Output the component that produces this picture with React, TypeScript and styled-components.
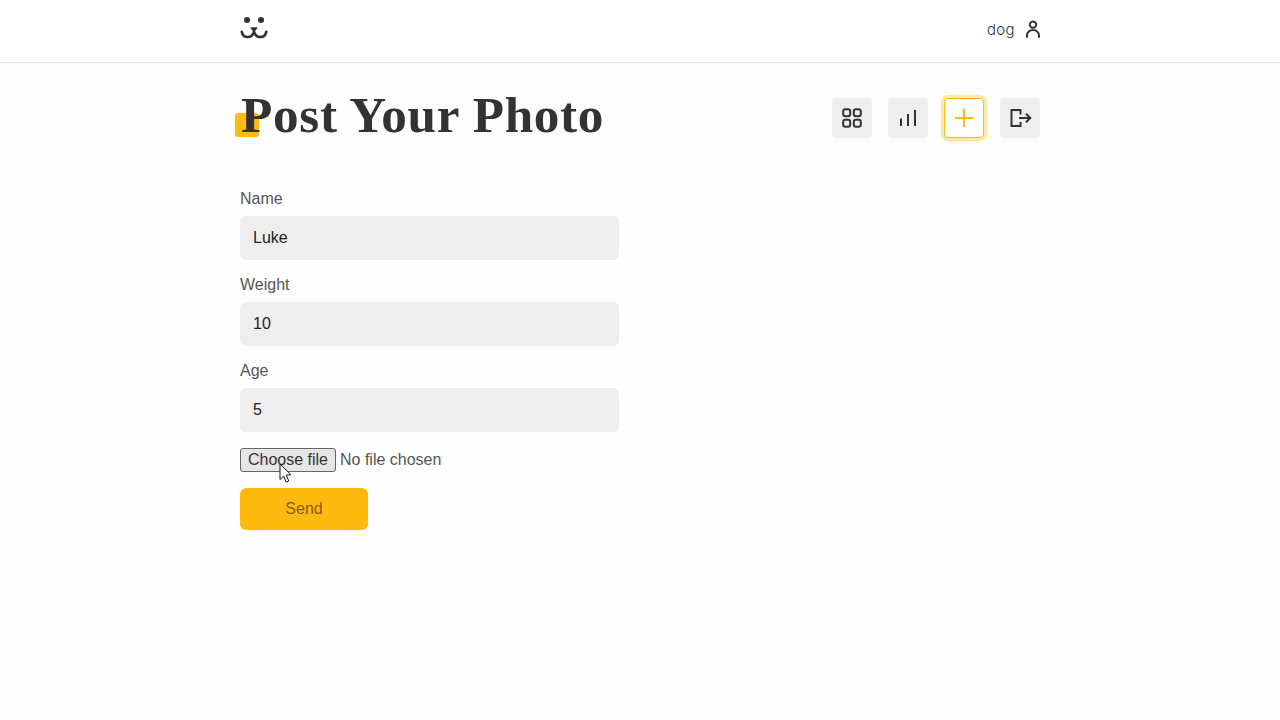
import React from "react";
import styled, { createGlobalStyle } from "styled-components";

const Global = createGlobalStyle`
  html, body { margin: 0; padding: 0; background: #fefefe; height: 100%; overflow: hidden; }
  body { font-family: "Liberation Sans", Arial, sans-serif; color: #333; }
`;

const TopBar = styled.header`
  height: 62px;
  border-bottom: 1px solid #e8e8e8;
  background: #fff;
`;
const Container = styled.div`
  width: 800px;
  margin: 0 auto;
`;
const TopInner = styled(Container)`
  height: 100%;
  display: flex;
  align-items: center;
  justify-content: space-between;
`;
const Logo = styled.svg`
  width: 28px;
  height: 26px;
  display: block;
  margin-top: -6px;
`;
const User = styled.div`
  display: flex;
  align-items: center;
  gap: 11px;
  font-family: Inter, sans-serif;
  font-size: 15px;
  font-weight: 300;
  letter-spacing: 0.35px;
  color: #333;
  margin-top: -4px;
`;
const Head = styled.div`
  display: flex;
  justify-content: space-between;
  align-items: flex-start;
  padding-top: 22px;
  height: 74px;
  margin-bottom: 31px;
`;
const Title = styled.h1`
  position: relative;
  z-index: 0;
  margin: 0;
  font-family: "Liberation Serif", serif;
  font-size: 51.2px;
  font-weight: 700;
  line-height: 60px;
  letter-spacing: 0.7px;
  color: #333;
  padding-left: 1px;
  &::before {
    content: "";
    position: absolute;
    z-index: -1;
    left: -5px;
    top: 28px;
    width: 24px;
    height: 24px;
    border-radius: 3px;
    background: #ffba10;
  }
`;
const Actions = styled.nav`
  display: flex;
  gap: 16px;
  margin-top: 13px;
`;
const Action = styled.button<{ $active?: boolean }>`
  width: 40px;
  height: 40px;
  padding: 0;
  border-radius: 4px;
  display: flex;
  align-items: center;
  justify-content: center;
  background: ${(p) => (p.$active ? "#fff" : "#eee")};
  color: ${(p) => (p.$active ? "#ffb90f" : "#333")};
  border: ${(p) => (p.$active ? "1px solid #ffba10" : "none")};
  box-shadow: ${(p) => (p.$active ? "0 0 0 3px #ffe8a3" : "none")};
`;
const Form = styled.form`
  width: 379px;
  display: flex;
  flex-direction: column;
`;
const Field = styled.div`
  display: flex;
  flex-direction: column;
  gap: 8px;
  margin-bottom: 16px;
`;
const Label = styled.label`
  font-size: 16px;
  line-height: 18px;
  color: #555;
`;
const TextInput = styled.input`
  height: 44px;
  box-sizing: border-box;
  border: none;
  outline: none;
  border-radius: 6px;
  background: #eee;
  padding: 0 13px;
  font-family: "Liberation Sans", Arial, sans-serif;
  font-size: 16px;
  color: #222;
`;
const FileRow = styled.div`
  position: relative;
  height: 24px;
  margin-bottom: 16px;
  display: flex;
  align-items: center;
  gap: 4px;
`;
const FileButton = styled.button`
  width: 96px;
  height: 24px;
  padding: 0;
  box-sizing: border-box;
  border: 1px solid #666;
  border-radius: 3px;
  background: #e6e6e6;
  color: #333;
  font-family: "Liberation Sans", Arial, sans-serif;
  font-size: 16px;
  white-space: nowrap;
`;
const FileNote = styled.span`
  font-size: 16px;
  color: #555;
`;
const Pointer = styled.svg`
  position: absolute;
  left: 39px;
  top: 15px;
  width: 13px;
  height: 21px;
`;
const Send = styled.button`
  width: 128px;
  height: 42px;
  border: none;
  border-radius: 6px;
  background: #ffba10;
  color: #8a5a00;
  font-family: "Liberation Sans", Arial, sans-serif;
  font-size: 16px;
`;

export default function App() {
  return (
    <>
      <Global />
      <TopBar>
        <TopInner>
          <Logo viewBox="0 0 28 26">
            <circle cx="7" cy="5" r="3" fill="#333" />
            <circle cx="21" cy="5" r="3" fill="#333" />
            <path d="M11.3 13h5.4L14 16.2z" fill="#333" stroke="#333" strokeWidth="1.4" strokeLinejoin="round" />
            <path d="M1.7 16.7C3 23.5 11.5 24 14 17C16.5 24 25 23.5 26.3 16.7" fill="none" stroke="#333" strokeWidth="2.6" strokeLinecap="round" />
          </Logo>
          <User>
            dog
            <svg width="14" height="18" viewBox="0 0 14 18" fill="none" stroke="#333" strokeWidth="2">
              <circle cx="7" cy="4.6" r="3.2" />
              <path d="M1 17v-1.5a6 5.5 0 0 1 12 0V17" strokeLinecap="round" />
            </svg>
          </User>
        </TopInner>
      </TopBar>
      <Container>
        <Head>
          <Title>Post Your Photo</Title>
          <Actions>
            <Action type="button">
              <svg width="24" height="24" viewBox="0 0 24 24" fill="none" stroke="#333" strokeWidth="2">
                <rect x="3.2" y="3.2" width="7" height="7" rx="2.2" />
                <rect x="13.8" y="3.2" width="7" height="7" rx="2.2" />
                <rect x="3.2" y="13.8" width="7" height="7" rx="2.2" />
                <rect x="13.8" y="13.8" width="7" height="7" rx="2.2" />
              </svg>
            </Action>
            <Action type="button">
              <svg width="24" height="24" viewBox="0 0 24 24" fill="none" stroke="#333" strokeWidth="2">
                <path d="M5 20v-7.5M12 20V8M19 20V4" />
              </svg>
            </Action>
            <Action type="button" $active>
              <svg width="24" height="24" viewBox="0 0 24 24" fill="none" stroke="#ffb90f" strokeWidth="2">
                <path d="M12 3v18M3 12h18" />
              </svg>
            </Action>
            <Action type="button">
              <svg width="24" height="24" viewBox="0 0 24 24" fill="none" stroke="#333" strokeWidth="2">
                <path d="M12.5 8.5V4H3.5v16h9v-4" />
                <path d="M11 12h11M18 7.7l4.3 4.3-4.3 4.3" />
              </svg>
            </Action>
          </Actions>
        </Head>
        <Form>
          <Field>
            <Label>Name</Label>
            <TextInput defaultValue="Luke" />
          </Field>
          <Field>
            <Label>Weight</Label>
            <TextInput defaultValue="10" />
          </Field>
          <Field>
            <Label>Age</Label>
            <TextInput defaultValue="5" />
          </Field>
          <FileRow>
            <FileButton type="button">Choose file</FileButton>
            <FileNote>No file chosen</FileNote>
            <Pointer viewBox="0 0 13 21">
              <path d="M1 1v15.5l3.6-3.4 2.6 6 2.6-1.1-2.6-5.9 4.8-.3z" fill="#fff" stroke="#111" strokeWidth="1" />
            </Pointer>
          </FileRow>
          <Send type="button">Send</Send>
        </Form>
      </Container>
    </>
  );
}
